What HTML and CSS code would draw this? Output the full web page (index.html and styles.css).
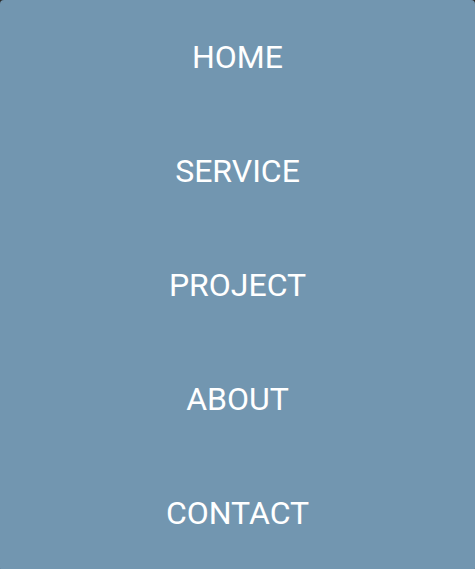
FILE: index.html
```html
<!DOCTYPE html>
<html lang="en">
<head>
<meta charset="utf-8">
<title>Menu</title>
<link rel="stylesheet" href="styles.css">
</head>
<body>
<nav class="menu">
  <a class="menu-item" href="#">HOME</a>
  <a class="menu-item" href="#">SERVICE</a>
  <a class="menu-item" href="#">PROJECT</a>
  <a class="menu-item" href="#">ABOUT</a>
  <a class="menu-item" href="#">CONTACT</a>
</nav>
</body>
</html>
```
FILE: styles.css
```css
html, body {
  margin: 0;
  padding: 0;
  background: #2b2b2b;
  height: 100%;
  overflow: hidden;
}
.menu {
  display: flex;
  flex-direction: column;
  background: #7296b0;
  border-radius: 4px 4px 2px 2px;
  overflow: hidden;
}
.menu-item {
  height: 114px;
  flex: none;
  display: flex;
  align-items: center;
  justify-content: center;
  color: #ffffff;
  text-decoration: none;
  font-family: Roboto, "Liberation Sans", sans-serif;
  font-size: 32px;
  font-weight: 400;
}
```
